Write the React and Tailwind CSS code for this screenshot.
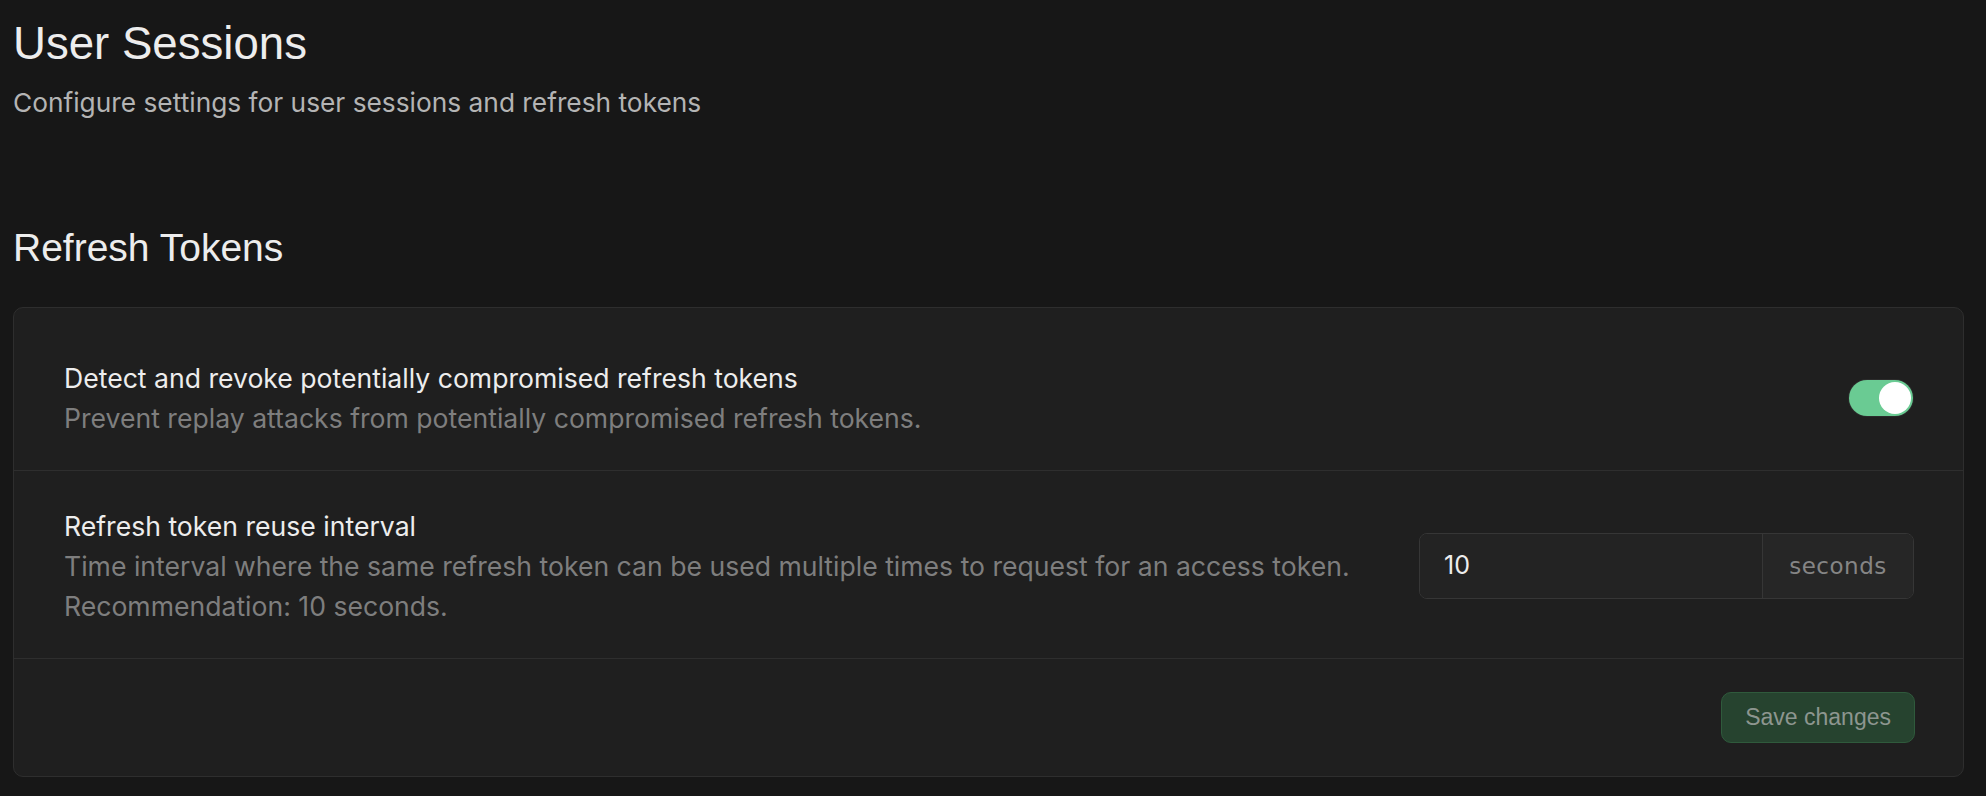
export default function App() {
  return (
    <div className="min-h-screen bg-[#171717] pl-[13px] pr-[22px] pt-4 pb-5 font-['Liberation_Sans',Arial,sans-serif]">
      <h1 className="text-[45.6px] leading-[56px] text-[#ededed]">User Sessions</h1>
      <p className="mt-[11px] font-['Inter',sans-serif] text-[26.3px] leading-[40px] text-[#b4b4b4]">
        Configure settings for user sessions and refresh tokens
      </p>

      <h2 className="mt-[101px] text-[39px] leading-[48px] text-[#ededed]">Refresh Tokens</h2>

      <div className="mt-[35px] rounded-[10px] border border-[#2e2e2e] bg-[#1f1f1f] font-['Inter',sans-serif]">
        <div className="flex items-center justify-between pl-[50px] pr-[50px] pt-[50px] pb-[32px] border-b border-[#2e2e2e]">
          <div>
            <div className="text-[26.6px] leading-[40px] text-[#ededed]">
              Detect and revoke potentially compromised refresh tokens
            </div>
            <div className="text-[26.6px] leading-[40px] text-[#7e7e7e]">
              Prevent replay attacks from potentially compromised refresh tokens.
            </div>
          </div>
          <button className="flex h-[36px] w-[64px] items-center justify-end rounded-full bg-[#6acb93] p-[2px] ring-1 ring-[#2b2b2b]">
            <span className="block h-[32px] w-[32px] rounded-full bg-white" />
          </button>
        </div>

        <div className="flex items-center justify-between pl-[50px] pr-[49px] pt-[35px] pb-[32px] border-b border-[#2e2e2e]">
          <div>
            <div className="text-[26.6px] leading-[40px] text-[#ededed]">Refresh token reuse interval</div>
            <div className="text-[26.6px] leading-[40px] text-[#7e7e7e]">
              Time interval where the same refresh token can be used multiple times to request for an access token.
            </div>
            <div className="text-[26.6px] leading-[40px] text-[#7e7e7e]">Recommendation: 10 seconds.</div>
          </div>
          <div className="flex h-[66px] w-[495px] overflow-hidden rounded-[8px] border border-[#363636]">
            <div className="flex flex-1 items-center bg-[#232323] pl-[24px] text-[25px] text-[#ededed]">10</div>
            <div className="flex w-[151px] items-center justify-center border-l border-[#363636] bg-[#262626] text-[23px] tracking-[0.5px] text-[#858585] font-['DejaVu_Sans',sans-serif]">
              seconds
            </div>
          </div>
        </div>

        <div className="flex justify-end pr-[48px] pt-[33px] pb-[33px]">
          <button className="h-[51px] rounded-[10px] border border-[#2f5a3c] bg-[#26432f] px-[23px] font-['Liberation_Sans',Arial,sans-serif] text-[23px] text-[#8d968f]">
            Save changes
          </button>
        </div>
      </div>
    </div>
  );
}
